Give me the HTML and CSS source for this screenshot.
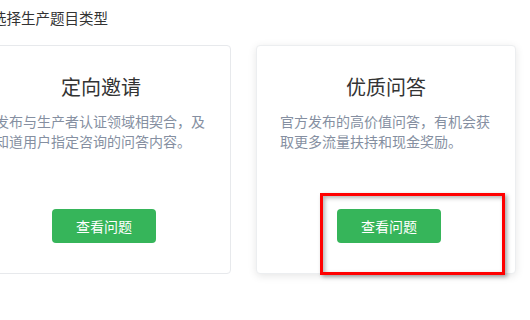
FILE: index.html
```html
<!DOCTYPE html>
<html lang="zh-CN">
<head>
<meta charset="utf-8">
<link rel="stylesheet" href="styles.css">
</head>
<body>
<div class="page">
  <h2 class="heading">选择生产题目类型</h2>
  <div class="cards">
    <div class="card">
      <h3 class="card-title">定向邀请</h3>
      <p class="card-desc">发布与生产者认证领域相契合，及知道用户指定咨询的问答内容。</p>
      <button class="btn">查看问题</button>
    </div>
    <div class="card card-hover">
      <h3 class="card-title">优质问答</h3>
      <p class="card-desc">官方发布的高价值问答，有机会获取更多流量扶持和现金奖励。</p>
      <button class="btn">查看问题</button>
    </div>
  </div>
</div>
<div class="highlight"></div>
</body>
</html>
```

FILE: styles.css
```css
* { box-sizing: border-box; }
html, body {
  margin: 0;
  padding: 0;
  background: #ffffff;
  font-family: "Noto Sans CJK SC", "Noto Sans", sans-serif;
  overflow: hidden;
}
.page {
  width: 530px;
  height: 320px;
  padding-top: 8px;
  margin-left: -29px;
}
.heading {
  margin: 0 0 0 21px;
  font-size: 14.5px;
  line-height: 20px;
  font-weight: normal;
  color: #333333;
}
.cards {
  display: flex;
  gap: 25px;
  margin-top: 17px;
}
.card {
  flex: 0 0 260px;
  height: 229px;
  border: 1px solid #e7e9ec;
  border-radius: 4px;
  background: #fff;
  padding: 27px 23px 30px;
  display: flex;
  flex-direction: column;
  align-items: center;
}
.card-hover {
  border-color: #eceef0;
  box-shadow: 0 2px 8px rgba(0, 0, 0, 0.10);
}
.card-title {
  margin: 0;
  font-size: 20px;
  line-height: 28px;
  font-weight: normal;
  color: #333333;
  text-align: center;
}
.card-desc {
  margin: 10px 0 0;
  width: 100%;
  font-size: 14px;
  line-height: 20px;
  color: #858fa1;
  flex: 1;
}
.btn {
  width: 104px;
  height: 34px;
  margin-left: 6px;
  border: none;
  border-radius: 4px;
  background: #36b55a;
  color: #ffffff;
  font-family: inherit;
  font-size: 14px;
  line-height: 34px;
  padding: 0;
}
.highlight {
  position: absolute;
  left: 320px;
  top: 193px;
  width: 185px;
  height: 82px;
  border: 3px solid #ff0000;
  box-shadow: 2px 2px 4px rgba(0, 0, 0, 0.35), inset 2px 2px 4px rgba(0, 0, 0, 0.3);
}
```
